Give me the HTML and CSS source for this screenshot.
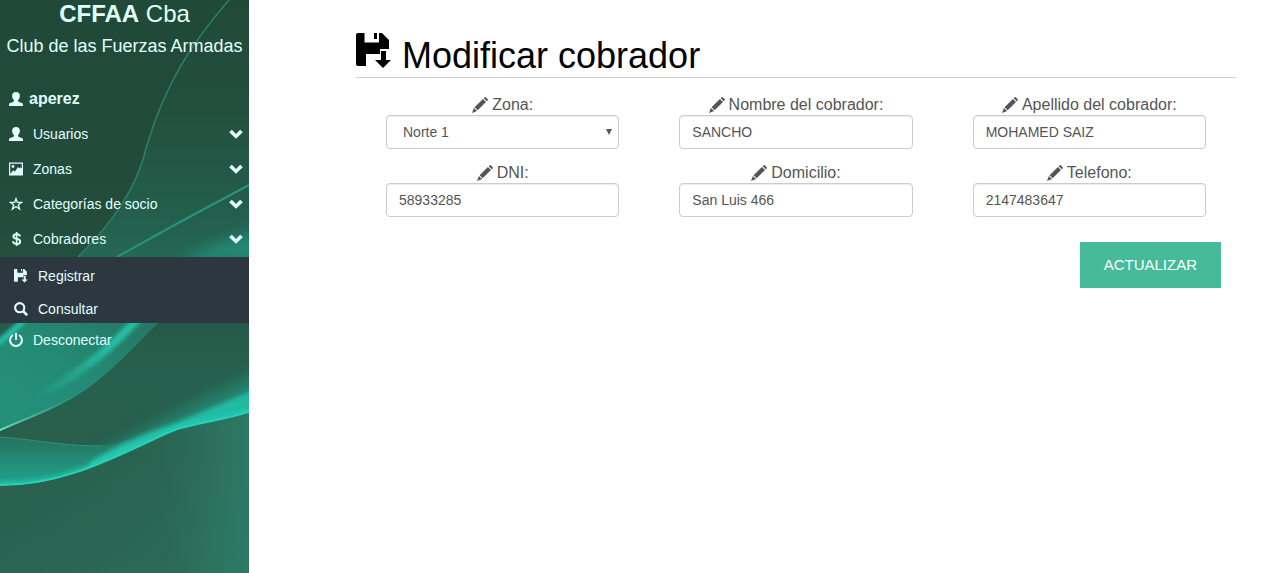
FILE: index.html
```html
<!DOCTYPE html>
<html lang="es">
<head>
<meta charset="utf-8">
<meta name="viewport" content="width=device-width, initial-scale=1">
<title>Modificar cobrador</title>
<link rel="stylesheet" href="styles.css">
</head>
<body>
<svg class="sprite" aria-hidden="true">
  <symbol id="user" viewBox="0 0 14 14"><path d="M7 0c2.500 0 3.900 1.500 3.900 3.700 0 1.700-.8 3.300-1.800 4.200v1c0 .5.3.8.8 1l3 1.200c.8.400 1.100.9 1.100 1.700V14H0v-1.200c0-.8.3-1.300 1.100-1.700l3-1.200c.5-.2.8-.5.8-1v-1C3.900 7 3.100 5.400 3.100 3.700 3.100 1.500 4.500 0 7 0z"/></symbol>
  <symbol id="picture" viewBox="0 0 14 14"><path fill-rule="evenodd" d="M0 .5h14v13H0zM1.200 1.700v10l3.200-3.400 1.400 1.400L9 5l1.400 1.500 1.200-1.200 1.200 1.200V1.700z"/><circle cx="4" cy="4.500" r="1.400"/></symbol>
  <symbol id="star" viewBox="0 0 14 14"><path fill="none" stroke="currentColor" stroke-width="1.300" d="M7 1.600l1.300 3.800h4.400L9.300 7.800l1.300 4.300L7 9.500l-3.600 2.600 1.300-4.300-3.400-2.400h4.400z"/></symbol>
  <symbol id="dollar" viewBox="0 0 14 14"><path fill="none" stroke="currentColor" stroke-width="2" d="M11 4.300C10.800 2.900 9.600 2.200 7.600 2.200c-2 0-3.200.8-3.200 2.200 0 3.200 6.800 1.600 6.800 5 0 1.600-1.300 2.500-3.500 2.500-2.300 0-3.600-.9-3.700-2.600"/><path d="M6.800 0h1.600v14H6.800z"/></symbol>
  <symbol id="save" viewBox="0 0 36 36"><path d="M2 0h6.500v9.500h14.500V0h3l7 7v9h-9v5H10v12H2q-2 0-2-2V2q0-2 2-2zM18 0h3v6h-3zM25 18h5v9h5l-8 8-8-8h6z"/></symbol>
  <symbol id="search" viewBox="0 0 14 14"><path fill="none" stroke="currentColor" stroke-width="2.600" d="M9 9l4.200 4.200"/><circle cx="5.700" cy="5.700" r="4.600" fill="none" stroke="currentColor" stroke-width="2.100"/></symbol>
  <symbol id="power" viewBox="0 0 14 14"><path fill="none" stroke="currentColor" stroke-width="2" d="M4.100 2a5.900 5.900 0 1 0 5.800 0M7 0v7"/></symbol>
  <symbol id="pencil" viewBox="0 0 16 16"><path d="M11.700 1.200l.9-.9q.6-.5 1.100 0l2 2q.5.600 0 1.100l-.9.900zM10.900 2l3.100 3.100-8.300 8.200-3.100-3.100zM1.900 10.900L5.100 14.100 0 16z"/></symbol>
  <symbol id="chevron" viewBox="0 0 14 10"><path d="M2.800.8L7 4.900 11.200.8l2.600 2.500L7 9.800.2 3.300z"/></symbol>
</svg>
<div class="layout">
  <aside class="sidebar">
    <svg class="sidebar-art" viewBox="0 0 249 573" preserveAspectRatio="none" aria-hidden="true">
      <defs>
        <linearGradient id="base" x2="0" y2="1"><stop offset="0" stop-color="#214938"/><stop offset=".4" stop-color="#234c3c"/><stop offset=".65" stop-color="#27604e"/><stop offset=".8" stop-color="#285f4c"/><stop offset="1" stop-color="#2a6452"/></linearGradient>
        <linearGradient id="edge"><stop offset="0" stop-color="#2f8470" stop-opacity="0"/><stop offset=".65" stop-color="#2f8470" stop-opacity=".15"/><stop offset="1" stop-color="#2f8470" stop-opacity=".7"/></linearGradient>
        <linearGradient id="veil" x2="0" y2="1"><stop offset="0" stop-color="#25705a" stop-opacity="0"/><stop offset=".35" stop-color="#25705a" stop-opacity=".1"/><stop offset="1" stop-color="#25806a" stop-opacity=".5"/></linearGradient>
        <linearGradient id="fold" x1="0" y1="1" x2="1" y2="0"><stop offset="0" stop-color="#24917b"/><stop offset=".5" stop-color="#248b75"/><stop offset="1" stop-color="#277661"/></linearGradient>
        <linearGradient id="streak" gradientUnits="userSpaceOnUse" x1="35" y1="396" x2="138" y2="320"><stop offset="0" stop-color="#26bfa7" stop-opacity="0"/><stop offset=".7" stop-color="#26bfa7"/></linearGradient>
        <linearGradient id="rim" gradientUnits="userSpaceOnUse" x1="0" y1="0" x2="90" y2="0"><stop offset="0" stop-color="#6ae0cb"/><stop offset="1" stop-color="#2f9a83" stop-opacity="0"/></linearGradient>
        <linearGradient id="ribbon" x2="0" y2="1"><stop offset="0" stop-color="#24705d" stop-opacity=".7"/><stop offset=".5" stop-color="#248b75"/><stop offset="1" stop-color="#22a991"/></linearGradient>
        <linearGradient id="wing"><stop offset="0" stop-color="#25c4ad"/><stop offset="1" stop-color="#24b8a1"/></linearGradient>
        <filter id="soft" x="-30%" y="-50%" width="160%" height="200%"><feGaussianBlur stdDeviation="7"/></filter>
        <filter id="glow" x="-20%" y="-20%" width="140%" height="140%"><feGaussianBlur stdDeviation="2"/></filter>
        <filter id="fine"><feGaussianBlur stdDeviation=".6"/></filter>
        <clipPath id="upper"><path d="M0 0h249v412c-25 8-48 10-72 17C132 447 72 487 0 485z"/></clipPath>
      </defs>
      <path fill="url(#base)" d="M0 0h249v573H0z"/>
      <path fill="url(#edge)" d="M0 485C72 486 132 447 177 429c24-7 46-9 72-17v161H0z"/>
      <path fill="url(#veil)" d="M229 0C190 45 165 85 147 145 137 190 110 225 78 257h171V0z"/>
      <path fill="#21ac95" opacity=".5" filter="url(#soft)" d="M180 262C205 246 230 238 260 230v32z"/>
      <path fill="none" stroke="#2b8069" stroke-width="1.500" d="M229 0C190 45 165 85 147 145 137 190 110 225 78 257"/>
      <path fill="none" stroke="#25957e" stroke-width="2" d="M249 185L180 222 117 257"/>
      <path fill="url(#fold)" d="M22 323C14 329 8 336 0 342v89c30-14 65-24 96-49 24-19 43-40 62-59z"/>
      <path fill="none" stroke="#25d0b6" stroke-width="5" filter="url(#glow)" d="M-4 344c10-7 20-17 30-26"/>
      <path fill="none" stroke="url(#streak)" stroke-width="8" filter="url(#glow)" d="M142 314C112 348 80 374 35 398"/>
      <path fill="none" stroke="url(#rim)" stroke-width="2" filter="url(#fine)" d="M-2 431c30-14 65-24 97-49"/>
      <g clip-path="url(#upper)">
        <path fill="#24a18b" opacity=".5" filter="url(#soft)" d="M90 456C155 424 205 394 265 370v42c-60 13-100 25-155 43z"/>
        <path fill="url(#ribbon)" d="M0 437c40 4 75 10 106 8 20-3 35-10 50-16v30L60 490H0z"/>
        <path fill="url(#wing)" filter="url(#glow)" d="M90 462C125 440 150 432 175 423c30-12 55-24 84-35v24c-30 9-58 12-82 20-25 10-55 27-87 38z"/>
      </g>
      <path fill="none" stroke="#319178" d="M0 437c45 4 65 9 100 9"/>
      <path fill="none" stroke="#25cdb5" stroke-width="5" opacity=".7" filter="url(#glow)" clip-path="url(#upper)" d="M-2 484C72 486 130 447 177 428c24-7 48-8 74-19"/>
      <path fill="none" stroke="#28d1b9" stroke-width="2" filter="url(#fine)" d="M-2 485C72 486 132 447 177 429c24-7 48-9 74-18"/>
    </svg>
    <header class="brand">
      <div class="brand-name"><strong>CFFAA</strong> Cba</div>
      <div class="brand-sub">Club de las Fuerzas Armadas</div>
    </header>
    <nav>
      <ul class="menu">
        <li><a class="item account" href="#"><svg class="icon"><use href="#user"/></svg>aperez</a></li>
        <li><a class="item" href="#"><svg class="icon"><use href="#user"/></svg>Usuarios<svg class="chevron"><use href="#chevron"/></svg></a></li>
        <li><a class="item" href="#"><svg class="icon"><use href="#picture"/></svg>Zonas<svg class="chevron"><use href="#chevron"/></svg></a></li>
        <li><a class="item" href="#"><svg class="icon"><use href="#star"/></svg>Categorías de socio<svg class="chevron"><use href="#chevron"/></svg></a></li>
        <li><a class="item" href="#"><svg class="icon"><use href="#dollar"/></svg>Cobradores<svg class="chevron"><use href="#chevron"/></svg></a>
          <ul class="submenu">
            <li><a class="item" href="#"><svg class="icon"><use href="#save"/></svg>Registrar</a></li>
            <li><a class="item" href="#"><svg class="icon"><use href="#search"/></svg>Consultar</a></li>
          </ul>
        </li>
        <li><a class="item" href="#"><svg class="icon"><use href="#power"/></svg>Desconectar</a></li>
      </ul>
    </nav>
  </aside>
  <main class="content">
    <h1 class="title"><svg class="title-icon"><use href="#save"/></svg>Modificar cobrador</h1>
    <form>
      <div class="fields">
        <div class="field">
          <label for="zona"><svg class="pencil"><use href="#pencil"/></svg>Zona:</label>
          <div class="select-wrap">
            <select class="control" id="zona"><option>Norte 1</option></select>
            <svg class="caret" viewBox="0 0 6 6" aria-hidden="true"><path d="M0 0h6L3 6z"/></svg>
          </div>
        </div>
        <div class="field">
          <label for="nombre"><svg class="pencil"><use href="#pencil"/></svg>Nombre del cobrador:</label>
          <input class="control" id="nombre" type="text" value="SANCHO">
        </div>
        <div class="field">
          <label for="apellido"><svg class="pencil"><use href="#pencil"/></svg>Apellido del cobrador:</label>
          <input class="control" id="apellido" type="text" value="MOHAMED SAIZ">
        </div>
        <div class="field">
          <label for="dni"><svg class="pencil"><use href="#pencil"/></svg>DNI:</label>
          <input class="control" id="dni" type="text" value="58933285">
        </div>
        <div class="field">
          <label for="domicilio"><svg class="pencil"><use href="#pencil"/></svg>Domicilio:</label>
          <input class="control" id="domicilio" type="text" value="San Luis 466">
        </div>
        <div class="field">
          <label for="telefono"><svg class="pencil"><use href="#pencil"/></svg>Telefono:</label>
          <input class="control" id="telefono" type="tel" value="2147483647">
        </div>
      </div>
      <div class="actions"><button class="submit" type="submit">ACTUALIZAR</button></div>
    </form>
  </main>
</div>
</body>
</html>
```
FILE: styles.css
```css
* { box-sizing: border-box; }
body {
  margin: 0;
  background: #fff;
  color: #555;
  font-family: "Liberation Sans", Arial, sans-serif;
  font-size: 14px;
  line-height: 20px;
}
svg { fill: currentColor; flex: none; }
ul { margin: 0; padding: 0; list-style: none; }
.sprite { position: absolute; width: 0; height: 0; }
.layout { display: flex; min-height: 100vh; }

.sidebar {
  position: relative;
  flex: none;
  width: 249px;
  background: #285f4c;
  color: #e0ffff;
  overflow: hidden;
}
.sidebar-art { position: absolute; inset: 0; width: 100%; height: 100%; }
.brand { position: relative; padding-bottom: 22px; text-align: center; white-space: nowrap; }
.brand-name { font-size: 24px; line-height: 28px; padding-bottom: 4px; }
.brand-sub { font-size: 18px; line-height: 28px; }
.menu { position: relative; }
.item {
  display: flex;
  align-items: center;
  gap: 10px;
  height: 35px;
  padding: 0 6px 2px 9px;
  color: inherit;
  text-decoration: none;
}
.icon { width: 14px; height: 14px; }
.account { gap: 6px; font-size: 16px; font-weight: bold; }
.chevron { width: 14px; height: 10px; margin-left: auto; }
.submenu { background: #2c3740; }
.submenu .item { height: 33px; padding: 4px 6px 0 14px; }

.content { flex: 1; min-width: 0; padding: 33px 39px 0 107px; }
.title {
  display: flex;
  gap: 10px;
  height: 45px;
  margin: 0 0 17px;
  border-bottom: 1px solid #ccc;
  color: #000;
  font-size: 36px;
  font-weight: normal;
  line-height: 46px;
}
.title-icon { width: 36px; height: 36px; }
.fields {
  display: grid;
  grid-template-columns: repeat(3, minmax(0, 1fr));
  gap: 14px 60px;
  padding: 0 30px;
}
.field label {
  display: flex;
  justify-content: center;
  align-items: center;
  gap: 4px;
  font-size: 16px;
}
.pencil { width: 16px; height: 16px; }
.control {
  display: block;
  width: 100%;
  height: 34px;
  margin: 0;
  padding: 6px 12px;
  border: 1px solid #ccc;
  border-radius: 4px;
  background: #fff;
  box-shadow: inset 0 1px 1px rgba(0, 0, 0, .075);
  color: #555;
  font: inherit;
}
.select-wrap { position: relative; }
select.control { appearance: none; padding-left: 16px; }
.caret { position: absolute; right: 7px; top: 14px; width: 6px; height: 6px; pointer-events: none; }
.actions { display: flex; justify-content: flex-end; padding: 25px 15px 0; }
.submit {
  height: 46px;
  padding: 0 24px;
  border: 0;
  background: #45bb99;
  color: #fff;
  font: inherit;
  font-size: 15px;
}
```
